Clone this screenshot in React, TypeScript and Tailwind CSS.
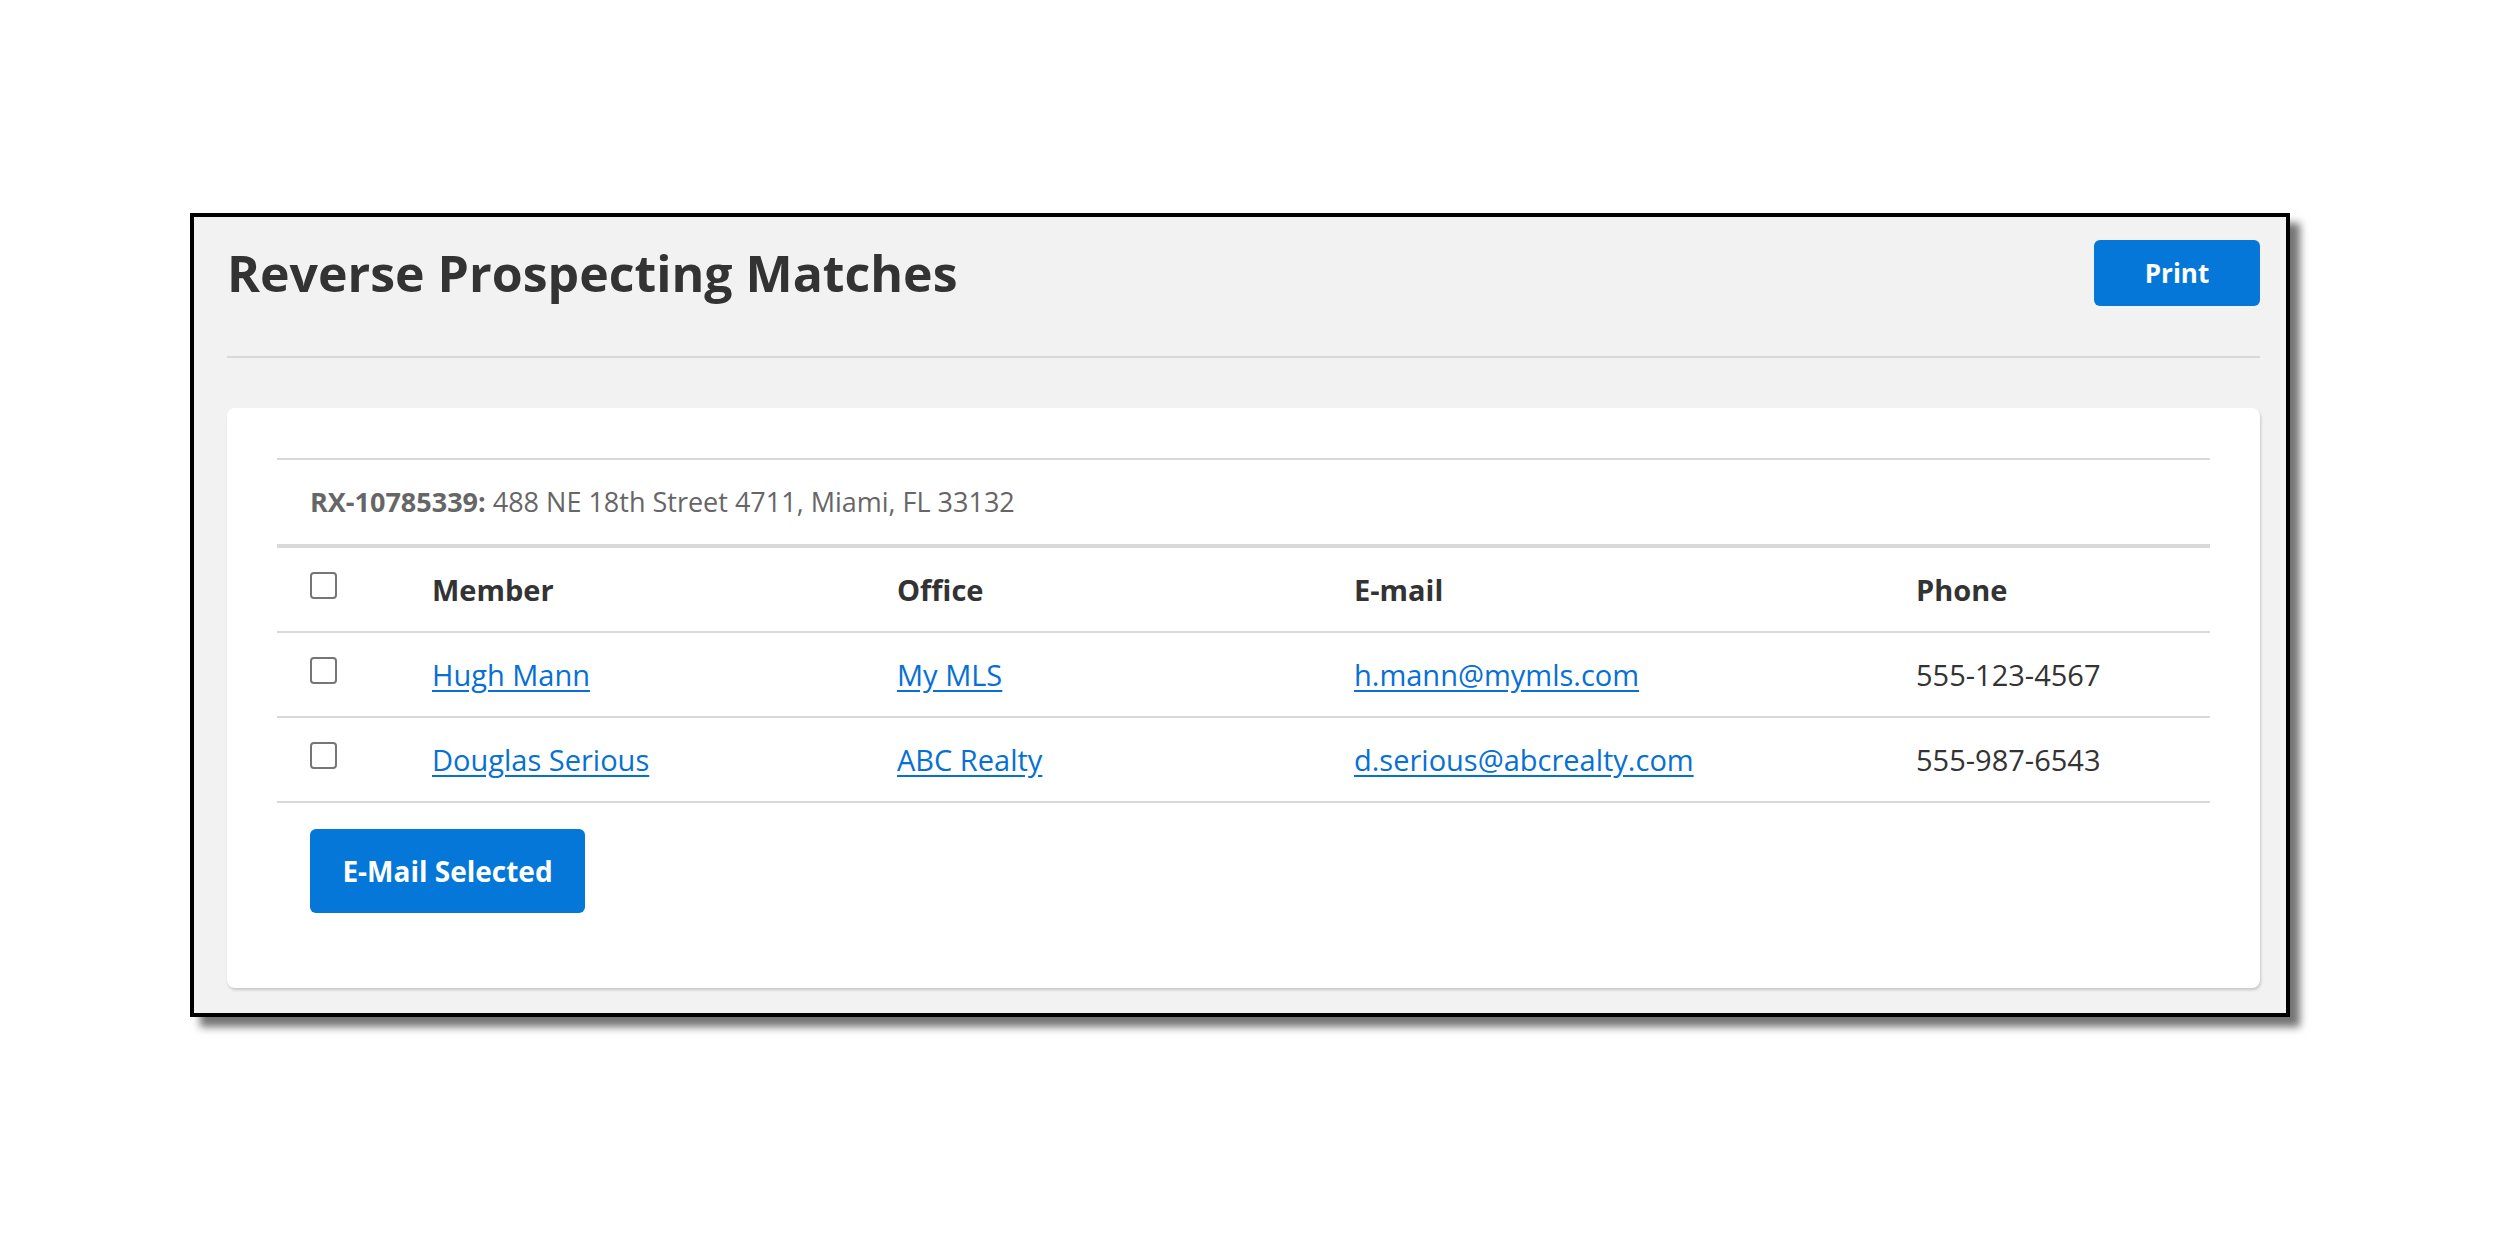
import React from "react";

interface Match {
  member: string;
  office: string;
  email: string;
  phone: string;
}

const MATCHES: Match[] = [
  { member: "Hugh Mann", office: "My MLS", email: "h.mann@mymls.com", phone: "555-123-4567" },
  { member: "Douglas Serious", office: "ABC Realty", email: "d.serious@abcrealty.com", phone: "555-987-6543" },
];

// row height includes the 2px bottom rule (border-box)
const GRID = "grid grid-cols-[155px_465px_457px_562px_1fr] items-center h-[85px] border-b-2 border-[#d9d9d9] text-[29px]";

function Check() {
  return (
    <input
      type="checkbox"
      className="appearance-none w-[27px] h-[27px] border-2 border-[#767676] rounded-[4px] bg-white mb-[9px] block"
    />
  );
}

export default function App() {
  return (
    <div className="min-h-screen bg-white pt-[213px] pl-[190px] font-['Open_Sans',sans-serif]">
      <div className="w-[2100px] h-[804px] border-4 border-black bg-[#f2f2f2] shadow-[10px_10px_8px_rgba(0,0,0,0.55)] pl-[33px] pr-[26px] pt-[23px] pb-[25px] flex flex-col">
        {/* Header */}
        <div className="flex items-center justify-between h-[66px]">
          <h1 className="text-[50px] font-bold text-[#333]">Reverse Prospecting Matches</h1>
          <button className="w-[166px] h-[66px] rounded-[6px] bg-[#0477d8] text-white font-bold text-[26px]">
            Print
          </button>
        </div>
        <div className="mt-[50px] h-[2px] bg-[#d9d9d9]" />

        {/* Card */}
        <div className="mt-[50px] flex-1 bg-white rounded-[8px] shadow-[1px_2px_3px_rgba(0,0,0,0.18)] p-[50px]">
          <div className="border-t-2 border-[#d9d9d9]">
            <div className="h-[88px] flex items-center pl-[33px] text-[27px] text-[#666] border-b-4 border-[#d9d9d9]">
              <span className="font-bold">RX-10785339:</span>
              <span className="ml-[7px]">488 NE 18th Street 4711, Miami, FL 33132</span>
            </div>

            <div className={GRID + " font-bold text-[#333]"}>
              <div className="pl-[33px]"><Check /></div>
              <div>Member</div>
              <div>Office</div>
              <div>E-mail</div>
              <div>Phone</div>
            </div>

            {MATCHES.map((m) => (
              <div key={m.email} className={GRID + " text-[#333]"}>
                <div className="pl-[33px]"><Check /></div>
                <div><a href="#" className="text-[#0770d4] underline underline-offset-[4px]">{m.member}</a></div>
                <div><a href="#" className="text-[#0770d4] underline underline-offset-[4px]">{m.office}</a></div>
                <div><a href="#" className="text-[#0770d4] underline underline-offset-[4px]">{m.email}</a></div>
                <div>{m.phone}</div>
              </div>
            ))}
          </div>

          <button className="mt-[26px] ml-[33px] w-[275px] h-[84px] rounded-[6px] bg-[#0477d8] text-white font-bold text-[28px]">
            E-Mail Selected
          </button>
        </div>
      </div>
    </div>
  );
}
